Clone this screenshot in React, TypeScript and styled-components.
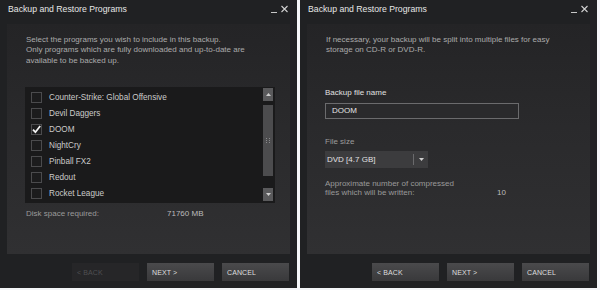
import React from "react";
import styled, { createGlobalStyle } from "styled-components";

const Global = createGlobalStyle`
  html, body { margin: 0; padding: 0; background: #ffffff; }
  body { font-family: "Liberation Sans", Arial, sans-serif; }
`;

const Desktop = styled.div`
  display: flex;
  gap: 3px;
  width: 600px;
  height: 290px;
  background: #f4f6f8;
`;

const Window = styled.div`
  width: 297px;
  height: 288px;
  display: flex;
  flex-direction: column;
  background: #202123;
`;

const TitleBar = styled.div`
  height: 24px;
  box-sizing: border-box;
  padding: 4px 9px 0 8px;
  display: flex;
  align-items: flex-start;
  justify-content: space-between;
`;

const Title = styled.span`
  font-size: 8.7px;
  line-height: 10px;
  color: #e6e6e6;
`;

const Controls = styled.div`
  display: flex;
  gap: 4px;
  margin-top: 1px;
`;

const Body = styled.div`
  flex: 1;
  margin: 0 7px;
  box-sizing: border-box;
  padding: 11px 18px 0 18px;
  display: flex;
  flex-direction: column;
  background: linear-gradient(#242426 0%, #2a2a2c 45%, #303032 100%);
`;

const Description = styled.p`
  margin: 0 0 0 1px;
  font-size: 8px;
  line-height: 10.4px;
  color: #ababab;
`;

const ListBox = styled.div`
  margin-top: 21px;
  width: 250px;
  height: 116px;
  background: #1a1a1b;
  display: flex;
`;

const Rows = styled.div`
  flex: 1;
  padding-top: 2px;
  display: flex;
  flex-direction: column;
`;

const Row = styled.div`
  height: 16px;
  display: flex;
  align-items: center;
  padding-left: 6px;
  gap: 7px;
  font-size: 8.2px;
  color: #cacaca;
`;

const Box = styled.div`
  width: 11px;
  height: 11px;
  box-sizing: border-box;
  border: 1px solid #4b4b4d;
  background: #1c1c1d;
  display: flex;
  align-items: center;
  justify-content: center;
`;

const ScrollBar = styled.div`
  width: 10px;
  margin: 1px 2px 2px 0;
  display: flex;
  flex-direction: column;
`;

const ScrollButton = styled.div`
  height: 13px;
  background: #5a5a5c;
  display: flex;
  align-items: center;
  justify-content: center;
`;

const Thumb = styled.div`
  margin-top: 4px;
  height: 71px;
  background: #4c4c4e;
  display: flex;
  align-items: center;
  justify-content: center;
`;

const Track = styled.div`
  flex: 1;
`;

const InfoRow = styled.div`
  margin-top: 6px;
  margin-left: 1px;
  display: grid;
  grid-template-columns: 141px auto;
  font-size: 8px;
  line-height: 10px;
  color: #9a9a9a;
`;

const Value = styled.span`
  color: #bbbbbb;
  align-self: end;
`;

const FieldLabel = styled.div<{ $top: number; $bright?: boolean }>`
  margin-top: ${(p) => p.$top}px;
  font-size: 8px;
  line-height: 10px;
  color: ${(p) => (p.$bright ? "#e0e0e0" : "#9c9c9c")};
`;

const TextInput = styled.div`
  margin-top: 5px;
  width: 194px;
  height: 16px;
  box-sizing: border-box;
  border: 1px solid #6b6b6d;
  background: #2a2a2c;
  padding-left: 6px;
  display: flex;
  align-items: center;
  font-size: 8px;
  color: #e4e4e4;
`;

const Select = styled.div`
  margin-top: 4px;
  width: 103px;
  height: 17px;
  background: #3c3c3e;
  display: flex;
  align-items: center;
  font-size: 8px;
  color: #e2e2e2;
`;

const SelectText = styled.span`
  flex: 1;
  padding-left: 2px;
`;

const SelectDivider = styled.span`
  width: 1px;
  height: 11px;
  background: #6a6a6c;
`;

const SelectArrow = styled.span`
  width: 14px;
  display: flex;
  justify-content: center;
`;

const EstimateRow = styled.div`
  margin-top: 11px;
  display: grid;
  grid-template-columns: 172px auto;
  font-size: 8px;
  line-height: 9.5px;
  color: #9a9a9a;
`;

const Footer = styled.div`
  height: 34px;
  box-sizing: border-box;
  padding: 9px 8px 0 0;
  display: flex;
  justify-content: flex-end;
  align-items: flex-start;
  gap: 8px;
`;

const Button = styled.div<{ $disabled?: boolean }>`
  width: 67px;
  height: 18px;
  box-sizing: border-box;
  padding-left: 5px;
  display: flex;
  align-items: center;
  font-size: 7px;
  letter-spacing: 0.1px;
  color: ${(p) => (p.$disabled ? "#505052" : "#dedede")};
  background: ${(p) =>
    p.$disabled ? "#262628" : "linear-gradient(#4a4a4c, #39393b)"};
`;

const WindowControls = () => (
  <Controls>
    <svg width="6" height="8" viewBox="0 0 6 8">
      <line x1="0" y1="7.5" x2="6" y2="7.5" stroke="#c8c8c8" strokeWidth="1" />
    </svg>
    <svg width="7" height="8" viewBox="0 0 7 8">
      <path d="M0.5 1 L6.5 7 M6.5 1 L0.5 7" stroke="#d0d0d0" strokeWidth="1.1" />
    </svg>
  </Controls>
);

const Check = () => (
  <svg width="9" height="9" viewBox="0 0 9 9">
    <path d="M1 4.6 L3.4 7.2 L8.2 1" fill="none" stroke="#f2f2f2" strokeWidth="1.8" />
  </svg>
);

const games = [
  "Counter-Strike: Global Offensive",
  "Devil Daggers",
  "DOOM",
  "NightCry",
  "Pinball FX2",
  "Redout",
  "Rocket League",
];

const Grip = () => (
  <svg width="4" height="5" viewBox="0 0 4 5">
    {[0, 2, 4].map((y) => (
      <React.Fragment key={y}>
        <rect x="0" y={y} width="1" height="1" fill="#8a8a8c" />
        <rect x="3" y={y} width="1" height="1" fill="#8a8a8c" />
      </React.Fragment>
    ))}
  </svg>
);

const SelectPage = () => (
  <Window>
    <TitleBar>
      <Title>Backup and Restore Programs</Title>
      <WindowControls />
    </TitleBar>
    <Body>
      <Description>
        Select the programs you wish to include in this backup.
        <br />
        Only programs which are fully downloaded and up-to-date are
        <br />
        available to be backed up.
      </Description>
      <ListBox>
        <Rows>
          {games.map((g) => (
            <Row key={g}>
              <Box>{g === "DOOM" && <Check />}</Box>
              <span>{g}</span>
            </Row>
          ))}
        </Rows>
        <ScrollBar>
          <ScrollButton>
            <svg width="5" height="3" viewBox="0 0 5 3">
              <path d="M0 3 L2.5 0 L5 3 Z" fill="#cfcfcf" />
            </svg>
          </ScrollButton>
          <Thumb>
            <Grip />
          </Thumb>
          <Track />
          <ScrollButton>
            <svg width="5" height="3" viewBox="0 0 5 3">
              <path d="M0 0 L2.5 3 L5 0 Z" fill="#cfcfcf" />
            </svg>
          </ScrollButton>
        </ScrollBar>
      </ListBox>
      <InfoRow>
        <span>Disk space required:</span>
        <Value>71760 MB</Value>
      </InfoRow>
    </Body>
    <Footer>
      <Button $disabled>&lt; BACK</Button>
      <Button>NEXT &gt;</Button>
      <Button>CANCEL</Button>
    </Footer>
  </Window>
);

const OptionsPage = () => (
  <Window>
    <TitleBar>
      <Title>Backup and Restore Programs</Title>
      <WindowControls />
    </TitleBar>
    <Body>
      <Description>
        If necessary, your backup will be split into multiple files for easy
        <br />
        storage on CD-R or DVD-R.
      </Description>
      <FieldLabel $top={32} $bright>
        Backup file name
      </FieldLabel>
      <TextInput>DOOM</TextInput>
      <FieldLabel $top={18}>File size</FieldLabel>
      <Select>
        <SelectText>DVD [4.7 GB]</SelectText>
        <SelectDivider />
        <SelectArrow>
          <svg width="5" height="3" viewBox="0 0 5 3">
            <path d="M0 0 L2.5 3 L5 0 Z" fill="#cfcfcf" />
          </svg>
        </SelectArrow>
      </Select>
      <EstimateRow>
        <span>
          Approximate number of compressed
          <br />
          files which will be written:
        </span>
        <Value>10</Value>
      </EstimateRow>
    </Body>
    <Footer>
      <Button>&lt; BACK</Button>
      <Button>NEXT &gt;</Button>
      <Button>CANCEL</Button>
    </Footer>
  </Window>
);

export default function App() {
  return (
    <>
      <Global />
      <Desktop>
        <SelectPage />
        <OptionsPage />
      </Desktop>
    </>
  );
}
